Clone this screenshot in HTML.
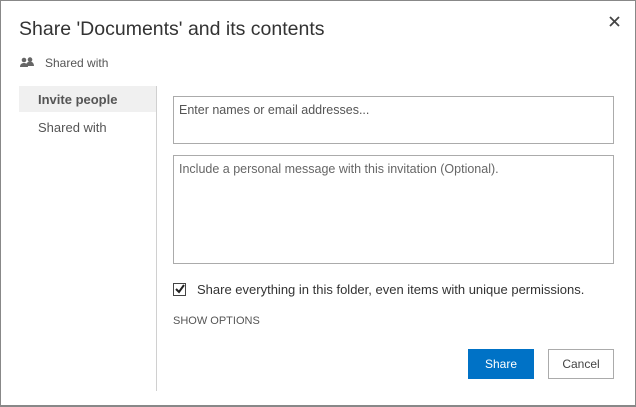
<!DOCTYPE html><html><head><style>
body{margin:0;width:636px;height:407px;overflow:hidden;background:#fff;font-family:"Liberation Sans",sans-serif;color:#444}
.frame{position:absolute;left:0;top:0;width:634px;height:404px;border:1px solid #888;border-bottom-width:2px}
.a{position:absolute;white-space:nowrap}
.box{position:absolute;border:1px solid #ababab;box-sizing:border-box;font-size:12.5px;color:#555;padding:6px 5px}
</style></head><body>
<div class="frame"></div>
<div class="a" style="left:19px;top:18px;font-size:19.5px;color:#333">Share 'Documents' and its contents</div>
<svg class="a" style="left:609px;top:16px" width="11" height="11"><path d="M1 1L10 10M10 1L1 10" stroke="#444" stroke-width="1.8"/></svg>
<svg class="a" style="left:20px;top:57px" width="16" height="12" viewBox="0 0 16 12"><circle cx="4" cy="3" r="2.3" fill="#666"/><circle cx="10" cy="2.6" r="2.3" fill="#666"/><path d="M0 10c0-3 2-4 4-4s4 1 4 4z M6 9c0-3 2-4.5 4-4.5s4 1.5 4 4.5z" fill="#666"/></svg>
<div class="a" style="left:45px;top:56px;font-size:12px;color:#555">Shared with</div>
<div class="a" style="left:19px;top:86px;width:137px;height:26px;background:#f0f0f0"></div>
<div class="a" style="left:38px;top:92px;font-size:13px;font-weight:bold;color:#555">Invite people</div>
<div class="a" style="left:38px;top:120px;font-size:13px;color:#555">Shared with</div>
<div class="a" style="left:156px;top:86px;width:1px;height:305px;background:#d0d0d0"></div>
<div class="box" style="left:173px;top:96px;width:441px;height:48px">Enter names or email addresses...</div>
<div class="box" style="left:173px;top:155px;width:441px;height:109px;color:#666">Include a personal message with this invitation (Optional).</div>
<div class="a" style="left:173px;top:283px;width:11px;height:11px;border:1px solid #444"></div>
<svg class="a" style="left:174px;top:283px" width="12" height="12"><path d="M2 6l3 3 5-7" stroke="#222" stroke-width="2" fill="none"/></svg>
<div class="a" style="left:197px;top:282px;font-size:13px;color:#333">Share everything in this folder, even items with unique permissions.</div>
<div class="a" style="left:173px;top:315px;font-size:11px;color:#555">SHOW OPTIONS</div>
<div class="a" style="left:468px;top:349px;width:66px;height:30px;background:#0072c6;color:#fff;font-size:12px;text-align:center;line-height:31px">Share</div>
<div class="a" style="left:548px;top:349px;width:66px;height:30px;box-sizing:border-box;border:1px solid #ababab;color:#444;font-size:12px;text-align:center;line-height:29px">Cancel</div>
</body></html>
